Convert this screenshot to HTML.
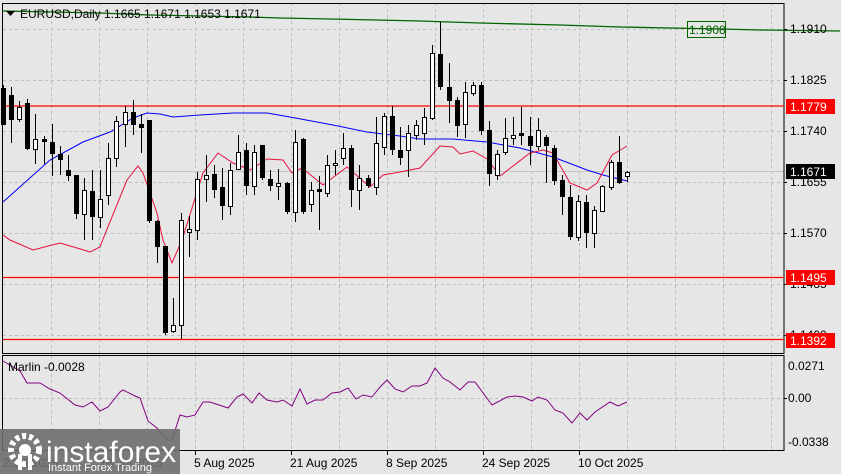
<!DOCTYPE html>
<html><head><meta charset="utf-8"><style>
html,body{margin:0;padding:0;background:#e6e6e6;}
svg{display:block;font-family:"Liberation Sans",sans-serif;}
</style></head><body>
<svg width="841" height="474" viewBox="0 0 841 474" xmlns="http://www.w3.org/2000/svg">
<rect width="841" height="474" fill="#e6e6e6"/>
<!-- grid -->
<g stroke="#bdbdbd" stroke-dasharray="3,3" stroke-width="1">
<path d="M51.5 3V353M99.5 3V353M147.5 3V353M195.5 3V353M243.5 3V353M291.5 3V353M339.5 3V353M387.5 3V353M435.5 3V353M483.5 3V353M531.5 3V353M579.5 3V353M627.5 3V353M675.5 3V353M723.5 3V353M771.5 3V353"/>
<path d="M51.5 356V450M99.5 356V450M147.5 356V450M195.5 356V450M243.5 356V450M291.5 356V450M339.5 356V450M387.5 356V450M435.5 356V450M483.5 356V450M531.5 356V450M579.5 356V450M627.5 356V450M675.5 356V450M723.5 356V450M771.5 356V450"/>
<path d="M3 29.5H784M3 80.5H784M3 131.5H784M3 182.5H784M3 233.5H784M3 284.5H784M3 335.5H784M3 398.5H784"/>
</g>
<line x1="3" y1="171.5" x2="784" y2="171.5" stroke="#c4c4c4"/>
<!-- panels -->
<rect x="2.5" y="3.5" width="781.5" height="350" fill="none" stroke="#000"/>
<rect x="2.5" y="355.5" width="781.5" height="95" fill="none" stroke="#000"/>
<!-- horizontal levels -->
<g stroke="#ff0000" stroke-width="1.3">
<line x1="3" y1="106" x2="784" y2="106"/>
<line x1="3" y1="277.5" x2="784" y2="277.5"/>
<line x1="3" y1="339.5" x2="784" y2="339.5"/>
</g>
<!-- green trend -->
<polyline fill="none" stroke="#006400" stroke-width="1.3" points="3,11 100,13 150,15 250,17 280,18 330,19 420,21 480,23 560,25 620,27 720,29 760,30 840,31"/>
<rect x="687.5" y="21.5" width="38" height="16" fill="none" stroke="#006400"/>
<text x="689" y="34" font-size="12" fill="#006400">1.1908</text>
<!-- blue MA -->
<polyline fill="none" stroke="#0000ff" stroke-width="1" points="3,202 50,160 83,142 110,132 133,118 147,113 160,114 173,117 200,115 233,113 267,113 290,117 333,125 367,132 400,136 420,139 453,139 487,142 520,148 553,157 587,170 603,175 627,181"/>
<!-- red MA -->
<polyline fill="none" stroke="#e8103c" stroke-width="1" points="3,235 10,240 33,250 60,243 77,248 90,252 100,247 103,239 127,180 138,166 143,173 157,213 163,240 172,263 182,240 203,173 218,153 233,163 250,170 267,159 283,160 292,173 302,168 323,185 347,167 370,187 383,175 400,172 420,168 440,146 453,147 460,154 473,151 487,159 500,176 530,153 543,150 553,153 570,183 587,190 597,183 612,155 627,146"/>
<!-- wicks -->
<path stroke="#000" stroke-width="1" fill="none" d="M3.5 85V125M11.5 87V143M19.5 101V122M27.5 99V150M35.5 114V164M44.5 136V164M52.5 124V176M60.5 146V175M68.5 155V181M76.5 175V219M84.5 178V240M92.5 170V240M100.5 170V228M108.5 143V205M116.5 116V167M125.5 106V147M133.5 100V135M141.5 114V153M149.5 120V223M157.5 220V263M165.5 246V335M173.5 298V333M181.5 213V339M189.5 216V257M197.5 172V240M206.5 155V202M214.5 165V198M222.5 168V220M230.5 163V215M238.5 135V170M246.5 143V195M254.5 145V195M262.5 145V180M270.5 170V191M278.5 169V200M287.5 182V214M295.5 130V222M303.5 138V214M311.5 182V212M319.5 176V230M327.5 155V197M335.5 150V175M343.5 133V165M351.5 145V207M359.5 165V210M368.5 175V188M376.5 117V195M384.5 113V155M392.5 106V155M400.5 127V165M408.5 125V177M416.5 120V140M424.5 108V145M432.5 45V120M440.5 22V90M449.5 63V123M457.5 97V137M465.5 82V138M473.5 82V96M481.5 82V135M489.5 121V186M497.5 150V180M505.5 118V155M513.5 117V145M521.5 107V145M530.5 117V165M538.5 118V150M546.5 135V183M554.5 145V185M562.5 175V215M570.5 185V240M578.5 195V241M586.5 195V248M594.5 206V248M602.5 185V212M611.5 160V190M619.5 136V184M627.5 171V182"/>
<!-- black bodies -->
<g fill="#000">
<rect x="1" y="88" width="5" height="37"/><rect x="9" y="95" width="5" height="25"/><rect x="25" y="103" width="5" height="46"/><rect x="42" y="139" width="5" height="3"/><rect x="50" y="142" width="5" height="12"/><rect x="58" y="154" width="5" height="6"/><rect x="66" y="170" width="5" height="6"/><rect x="74" y="175" width="5" height="39"/><rect x="90" y="191" width="5" height="26"/><rect x="131" y="112" width="5" height="13"/><rect x="139" y="124" width="5" height="4"/><rect x="147" y="120" width="5" height="101"/><rect x="155" y="221" width="5" height="26"/><rect x="163" y="246" width="5" height="87"/><rect x="212" y="174" width="5" height="16"/><rect x="220" y="187" width="5" height="19"/><rect x="244" y="150" width="5" height="36"/><rect x="260" y="145" width="5" height="33"/><rect x="268" y="179" width="5" height="7"/><rect x="285" y="183" width="5" height="29"/><rect x="301" y="139" width="5" height="73"/><rect x="317" y="189" width="5" height="3"/><rect x="349" y="148" width="5" height="42"/><rect x="366" y="178" width="5" height="8"/><rect x="390" y="116" width="5" height="34"/><rect x="398" y="150" width="5" height="8"/><rect x="438" y="54" width="5" height="33"/><rect x="447" y="87" width="5" height="14"/><rect x="455" y="100" width="5" height="26"/><rect x="479" y="85" width="5" height="46"/><rect x="487" y="130" width="5" height="44"/><rect x="519" y="133" width="5" height="3"/><rect x="528" y="136" width="5" height="10"/><rect x="544" y="137" width="5" height="9"/><rect x="552" y="148" width="5" height="33"/><rect x="560" y="180" width="5" height="17"/><rect x="568" y="197" width="5" height="40"/><rect x="584" y="202" width="5" height="31"/><rect x="617" y="162" width="5" height="21"/>
</g>
<!-- white bodies -->
<g fill="#fff" stroke="#000" stroke-width="1">
<rect x="17.5" y="107.5" width="4" height="12"/><rect x="33.5" y="139.5" width="4" height="10"/><rect x="82.5" y="190.5" width="4" height="24"/><rect x="98.5" y="199.5" width="4" height="18"/><rect x="106.5" y="158.5" width="4" height="37"/><rect x="114.5" y="121.5" width="4" height="37"/><rect x="123.5" y="112.5" width="4" height="12"/><rect x="171.5" y="325.5" width="4" height="6"/><rect x="179.5" y="220.5" width="4" height="105"/><rect x="187.5" y="229.5" width="4" height="3"/><rect x="195.5" y="179.5" width="4" height="51"/><rect x="204.5" y="175.5" width="4" height="4"/><rect x="228.5" y="170.5" width="4" height="36"/><rect x="236.5" y="152.5" width="4" height="17"/><rect x="252.5" y="152.5" width="4" height="34"/><rect x="276.5" y="183.5" width="4" height="3"/><rect x="293.5" y="142.5" width="4" height="70"/><rect x="309.5" y="190.5" width="4" height="14"/><rect x="325.5" y="165.5" width="4" height="28"/><rect x="333.5" y="163.5" width="4" height="2"/><rect x="341.5" y="148.5" width="4" height="10"/><rect x="357.5" y="178.5" width="4" height="12"/><rect x="374.5" y="143.5" width="4" height="44"/><rect x="382.5" y="116.5" width="4" height="31"/><rect x="406.5" y="133.5" width="4" height="17"/><rect x="414.5" y="125.5" width="4" height="10"/><rect x="422.5" y="117.5" width="4" height="16"/><rect x="430.5" y="53.5" width="4" height="65"/><rect x="463.5" y="92.5" width="4" height="32"/><rect x="471.5" y="85.5" width="4" height="8"/><rect x="495.5" y="154.5" width="4" height="21"/><rect x="503.5" y="138.5" width="4" height="14"/><rect x="511.5" y="135.5" width="4" height="3"/><rect x="536.5" y="130.5" width="4" height="16"/><rect x="576.5" y="201.5" width="4" height="36"/><rect x="592.5" y="210.5" width="4" height="23"/><rect x="600.5" y="186.5" width="4" height="25"/><rect x="609.5" y="162.5" width="4" height="25"/><rect x="625.5" y="172.5" width="4" height="4"/>
</g>
<!-- marlin -->
<polyline fill="none" stroke="#800080" stroke-width="1" points="3,361 20,371 27,383 40,383 50,389 60,393 75,405 83,407 92,402 100,411 108,407 120,392 123,390 135,396 140,398 148,421 157,428 167,440 172,440 180,415 187,417 195,415 203,402 210,402 228,408 237,397 243,394 252,403 259,393 267,400 277,402 283,400 292,406 300,389 307,404 315,400 323,400 332,393 340,392 348,388 356,399 363,395 372,397 380,387 387,380 395,389 403,392 412,386 420,386 427,383 435,368 443,378 450,382 460,390 468,382 475,382 492,405 507,397 515,396 523,397 532,401 538,397 547,400 555,410 563,413 572,423 580,413 587,420 595,412 610,402 618,406 627,402"/>
<!-- header -->
<path d="M6 11h9l-4.5 5z" fill="#000"/>
<text x="20" y="18" font-size="12" fill="#000">EURUSD,Daily  1.1665 1.1671 1.1653 1.1671</text>
<text x="8" y="371" font-size="12" fill="#000">Marlin -0.0028</text>
<!-- price axis -->
<g font-size="12" fill="#000">
<text x="790" y="33">1.1910</text>
<text x="790" y="84">1.1825</text>
<text x="790" y="135">1.1740</text>
<text x="790" y="186">1.1655</text>
<text x="790" y="237">1.1570</text>
<text x="790" y="288">1.1485</text>
<text x="790" y="339">1.1400</text>
<text x="788" y="370">0.0271</text>
<text x="788" y="402">0.00</text>
<text x="788" y="446">-0.0338</text>
</g>
<g stroke="#000"><path d="M784 29.5h3M784 80.5h3M784 131.5h3M784 182.5h3M784 233.5h3M784 284.5h3M784 335.5h3M784 398.5h3"/></g>
<rect x="786" y="99" width="49" height="15" fill="#ff0000"/><text x="790" y="111" font-size="12" fill="#fff">1.1779</text>
<rect x="786" y="164" width="49" height="15" fill="#000"/><text x="790" y="176" font-size="12" fill="#fff">1.1671</text>
<rect x="786" y="270" width="49" height="15" fill="#ff0000"/><text x="790" y="282" font-size="12" fill="#fff">1.1495</text>
<rect x="786" y="333" width="49" height="15" fill="#ff0000"/><text x="790" y="345" font-size="12" fill="#fff">1.1392</text>
<!-- date axis -->
<g stroke="#000"><path d="M195.5 450v5M291.5 450v5M387.5 450v5M483.5 450v5M579.5 450v5"/></g>
<g font-size="12" fill="#000">
<text x="194" y="467">5 Aug 2025</text>
<text x="290" y="467">21 Aug 2025</text>
<text x="386" y="467">8 Sep 2025</text>
<text x="482" y="467">24 Sep 2025</text>
<text x="578" y="467">10 Oct 2025</text>
<text x="3" y="467">2 Jul 2025</text>
<text x="100" y="467">18 Jul 2025</text>
</g>
<!-- logo -->
<rect x="0" y="429" width="180" height="45" fill="#6e6e6e" opacity="0.9"/>
<g fill="#fff">
<circle cx="25" cy="450" r="14" fill="none" stroke="#fff" stroke-width="6" stroke-dasharray="4,3"/>
<circle cx="25" cy="450" r="6"/>
<rect x="18" y="454" width="4" height="16"/><rect x="28" y="454" width="4" height="16"/>
</g>
<text x="46" y="462" font-size="30" fill="#fff">instaforex</text>
<text x="48" y="471" font-size="11" fill="#fff">Instant Forex Trading</text>
</svg>
</body></html>
